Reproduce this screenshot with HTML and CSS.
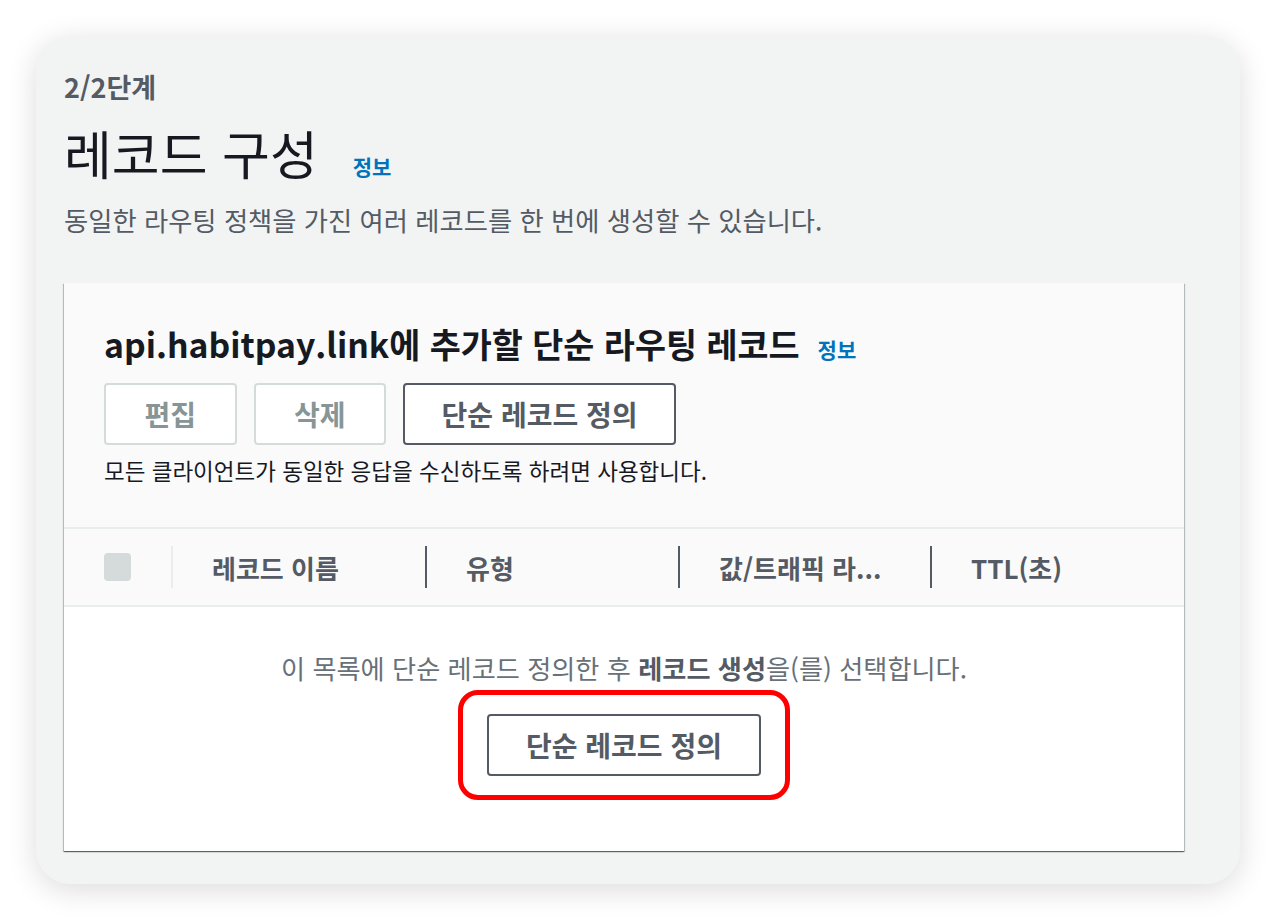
FILE: index.html
```html
<!DOCTYPE html>
<html lang="ko">
<head>
<meta charset="utf-8">
<title>레코드 구성</title>
<link rel="stylesheet" href="styles.css">
</head>
<body>
<div class="panel">
  <div class="step">2/2단계</div>
  <div class="title-row">
    <h1 class="title">레코드 구성</h1>
    <a class="info info-lg">정보</a>
  </div>
  <p class="desc">동일한 라우팅 정책을 가진 여러 레코드를 한 번에 생성할 수 있습니다.</p>

  <div class="card">
    <div class="card-head">
      <div class="card-title-row">
        <h2 class="card-title">api.habitpay.link에 추가할 단순 라우팅 레코드</h2>
        <a class="info">정보</a>
      </div>
      <div class="actions">
        <button class="btn btn-disabled">편집</button>
        <button class="btn btn-disabled">삭제</button>
        <button class="btn btn-long">단순 레코드 정의</button>
      </div>
      <p class="hint">모든 클라이언트가 동일한 응답을 수신하도록 하려면 사용합니다.</p>
    </div>

    <div class="thead">
      <div class="th th-check"><span class="checkbox"></span></div>
      <div class="th"><span class="sep sep-light"></span><span class="th-label">레코드 이름</span></div>
      <div class="th"><span class="sep"></span><span class="th-label">유형</span></div>
      <div class="th"><span class="sep"></span><span class="th-label">값/트래픽 라...</span></div>
      <div class="th"><span class="sep"></span><span class="th-label">TTL(초)</span></div>
    </div>

    <div class="empty">
      <p class="empty-text">이 목록에 단순 레코드 정의한 후 <b>레코드 생성</b>을(를) 선택합니다.</p>
      <div class="highlight">
        <button class="btn btn-long">단순 레코드 정의</button>
      </div>
    </div>
  </div>
</div>
</body>
</html>
```

FILE: styles.css
```css
* { box-sizing: border-box; }

html, body {
  margin: 0;
  padding: 0;
  background: #ffffff;
}

body {
  font-family: "Noto Sans CJK KR", "Noto Sans", sans-serif;
  color: #16191f;
  width: 1276px;
  height: 920px;
  overflow: hidden;
}

.panel {
  margin: 36px 0 0 36px;
  width: 1204px;
  height: 848px;
  background: #f2f3f3;
  border-radius: 34px;
  box-shadow: 0 6px 30px rgba(0, 0, 0, 0.14);
  padding: 35px 56px 0 28px;
}

.step {
  font-size: 27px;
  line-height: 32px;
  font-weight: 700;
  color: #545b64;
}

.title-row {
  display: flex;
  align-items: baseline;
  margin-top: 20px;
}

.title {
  margin: 0;
  font-size: 52px;
  line-height: 60px;
  font-weight: 400;
  color: #16191f;
}

.info {
  font-size: 21px;
  font-weight: 700;
  color: #0073bb;
  margin-left: 18px;
}

.info-lg {
  margin-left: 35px;
}

.desc {
  margin: 21px 0 0;
  font-size: 26.3px;
  line-height: 32px;
  color: #545b64;
}

.card {
  margin-top: 47px;
  background: #ffffff;
  height: 568px;
  box-shadow: 0 1px 1px 0 rgba(0, 28, 36, 0.45), 1px 1px 1px 0 rgba(0, 28, 36, 0.2), -1px 1px 1px 0 rgba(0, 28, 36, 0.2);
  display: flex;
  flex-direction: column;
}

.card-head {
  background: #fafafa;
  padding: 40px 40px 43px;
}

.card-title-row {
  display: flex;
  align-items: baseline;
}

.card-title {
  margin: 0;
  font-size: 33.75px;
  line-height: 42px;
  font-weight: 700;
  color: #16191f;
}

.actions {
  display: flex;
  gap: 17px;
  margin-top: 18px;
}

.btn {
  font-family: inherit;
  font-size: 28px;
  font-weight: 700;
  height: 62px;
  padding: 0 38.5px;
  background: #ffffff;
  color: #545b64;
  border: 2px solid #545b64;
  border-radius: 4px;
}

.btn-long {
  padding: 0 36.5px;
}

.btn-disabled {
  color: #879596;
  border-color: #d5dbdb;
}

.hint {
  margin: 11px 0 0;
  font-size: 22.5px;
  line-height: 28px;
  color: #16191f;
}

.thead {
  display: grid;
  grid-template-columns: 107px 254px 253px 252px 1fr;
  height: 80px;
  background: #fafafa;
  border-top: 2px solid #eaeded;
  border-bottom: 2px solid #eaeded;
}

.th {
  display: flex;
  align-items: center;
  font-size: 26px;
  font-weight: 700;
  color: #545b64;
}

.th-check {
  padding-left: 40px;
}

.checkbox {
  width: 27px;
  height: 28px;
  background: #d5dbdb;
  border-radius: 4px;
}

.sep {
  width: 2px;
  height: 42px;
  background: #545b64;
}

.sep-light {
  background: #eaeded;
}

.th-label {
  margin-left: 39px;
}

.empty {
  flex: 1;
  display: flex;
  flex-direction: column;
  align-items: center;
  padding-top: 45px;
}

.empty-text {
  margin: 0;
  font-size: 26.2px;
  line-height: 32px;
  color: #687078;
}

.empty-text b {
  color: #545b64;
}

.highlight {
  margin-top: 6px;
  border: 5px solid #ff0000;
  border-radius: 20px;
  padding: 19px 24px;
}
```
